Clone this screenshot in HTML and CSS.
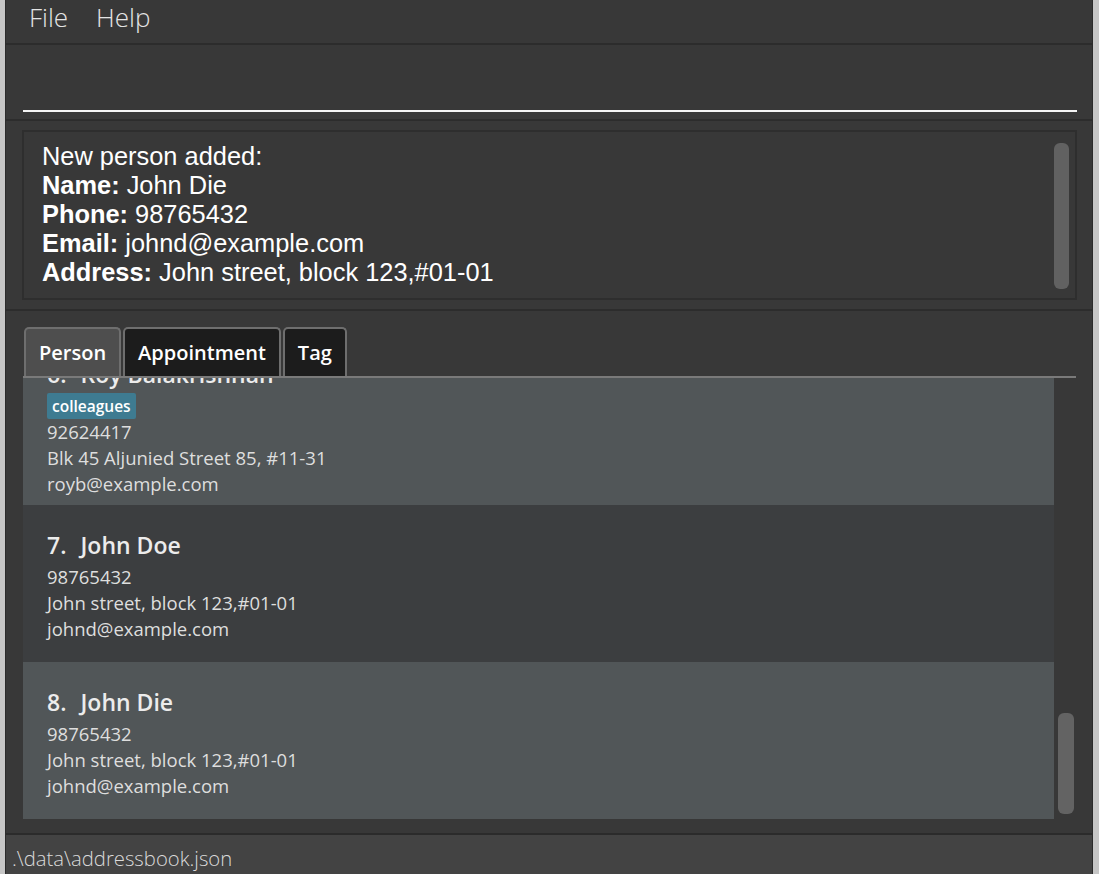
FILE: index.html
```html
<!DOCTYPE html>
<html>
<head>
<meta charset="utf-8">
<link rel="stylesheet" href="styles.css">
</head>
<body>
<div class="frame">
  <div class="edge edge-left"></div>
  <div class="app">
    <div class="menubar">
      <span class="menu-item">File</span>
      <span class="menu-item">Help</span>
    </div>
    <div class="command">
      <div class="command-input"></div>
    </div>
    <div class="result">
      <div class="result-box">
        <div class="result-text">
          <div>New person added:</div>
          <div><b>Name:</b> John Die</div>
          <div><b>Phone:</b> 98765432</div>
          <div><b>Email:</b> johnd@example.com</div>
          <div><b>Address:</b> John street, block 123,#01-01</div>
        </div>
        <div class="result-scroll"><div class="result-thumb"></div></div>
      </div>
    </div>
    <div class="lists">
      <div class="tabs">
        <div class="tab tab-selected">Person</div>
        <div class="tab">Appointment</div>
        <div class="tab">Tag</div>
      </div>
      <div class="list">
        <div class="cells">
          <div class="card card-even card-first">
            <div class="card-name"><span class="card-id">6.</span>Roy Balakrishnan</div>
            <div class="card-tags"><span class="tag">colleagues</span></div>
            <div class="card-line">92624417</div>
            <div class="card-line">Blk 45 Aljunied Street 85, #11-31</div>
            <div class="card-line">royb@example.com</div>
          </div>
          <div class="card card-odd">
            <div class="card-name"><span class="card-id">7.</span>John Doe</div>
            <div class="card-line">98765432</div>
            <div class="card-line">John street, block 123,#01-01</div>
            <div class="card-line">johnd@example.com</div>
          </div>
          <div class="card card-even">
            <div class="card-name"><span class="card-id">8.</span>John Die</div>
            <div class="card-line">98765432</div>
            <div class="card-line">John street, block 123,#01-01</div>
            <div class="card-line">johnd@example.com</div>
          </div>
        </div>
        <div class="list-scroll"><div class="list-thumb"></div></div>
      </div>
    </div>
    <div class="status">.\data\addressbook.json</div>
  </div>
  <div class="edge edge-right"></div>
</div>
</body>
</html>
```
FILE: styles.css
```css
* { box-sizing: border-box; }
html, body { margin: 0; padding: 0; }
body {
  width: 1099px;
  height: 874px;
  overflow: hidden;
  background: #383838;
  font-family: "Open Sans", "Noto Sans", sans-serif;
}
.frame {
  display: flex;
  height: 874px;
}
.edge { background: #c6c6c6; flex: none; }
.edge-left { width: 5px; }
.edge-right { width: 6px; }
.app {
  flex: 1;
  display: flex;
  flex-direction: column;
  background: #383838;
  border-left: 1px solid #2b2b2b;
  border-right: 1px solid #2b2b2b;
}
.menubar {
  height: 45px;
  flex: none;
  display: flex;
  align-items: flex-start;
  padding-left: 23px;
  gap: 28px;
  border-bottom: 2px solid #2c2c2c;
}
.menu-item {
  color: #e4e4e4;
  font-size: 26px;
  font-weight: 300;
  line-height: 34px;
}
.command {
  height: 76px;
  flex: none;
  padding: 0 15px 7px 17px;
  border-bottom: 2px solid #2c2c2c;
}
.command-input {
  height: 67px;
  border-bottom: 2px solid #f4f4f4;
}
.result {
  height: 190px;
  flex: none;
  padding: 9px 15px 9px 16px;
  border-bottom: 2px solid #2c2c2c;
}
.result-box {
  height: 170px;
  border: 2px solid #2e2e2e;
  display: flex;
  background: #383838;
}
.result-text {
  flex: 1;
  padding: 10px 0 0 18px;
  color: #ffffff;
  font-family: "Liberation Sans", Arial, sans-serif;
  font-size: 25.4px;
  line-height: 29px;
}
.result-scroll {
  width: 21px;
  padding: 11px 6px 9px 0;
}
.result-thumb {
  width: 15px;
  height: 100%;
  background: #616161;
  border-radius: 6px;
}
.lists {
  flex: 1;
  display: flex;
  flex-direction: column;
  padding: 16px 16px 13px 17px;
  border-bottom: 2px solid #2b2b2b;
  min-height: 0;
}
.tabs {
  display: flex;
  gap: 2px;
  padding-left: 1px;
  height: 51px;
  flex: none;
  border-bottom: 2px solid #7a7a7a;
  align-items: flex-end;
}
.tab {
  height: 49px;
  padding: 0 13px;
  background: #1c1c1c;
  border: 2px solid #6e6e6e;
  border-bottom: none;
  border-radius: 5px 5px 0 0;
  color: #ffffff;
  font-size: 20px;
  font-weight: 600;
  line-height: 47px;
}
.tab-selected {
  background: #4e4e4e;
}
.list {
  flex: 1;
  display: flex;
  min-height: 0;
  overflow: hidden;
}
.cells {
  flex: 1;
  overflow: hidden;
}
.card {
  min-height: 157px;
  padding: 25px 0 8px 24px;
  color: #dedede;
}
.card-first { margin-top: -44px; }
.card-even { background: #515658; }
.card-odd { background: #3c3e40; }
.card-name {
  font-size: 23px;
  font-weight: 600;
  line-height: 30px;
  color: #ececec;
  margin-bottom: 4px;
}
.card-id { margin-right: 14px; }
.card-tags { height: 26px; display: flex; align-items: flex-start; }
.tag {
  background: #3e7b91;
  color: #ffffff;
  font-size: 15.5px;
  font-weight: 600;
  line-height: 26px;
  padding: 0 5px;
  border-radius: 2px;
}
.card-line {
  font-size: 18.5px;
  line-height: 26px;
}
.list-scroll {
  width: 22px;
  flex: none;
  padding: 335px 2px 0 4px;
}
.list-thumb {
  width: 16px;
  height: 101px;
  background: #636363;
  border-radius: 6px;
}
.status {
  height: 39px;
  flex: none;
  background: #434343;
  color: #dadada;
  font-size: 20.3px;
  font-weight: 300;
  line-height: 46px;
  padding-left: 6px;
}
```
